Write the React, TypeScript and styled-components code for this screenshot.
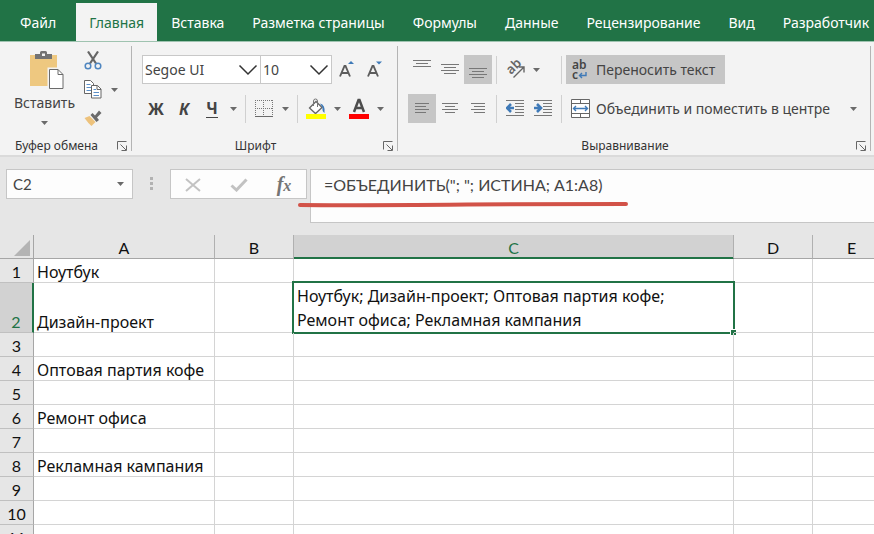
import React from "react";
import styled, { createGlobalStyle, css } from "styled-components";

const GREEN = "#217346";
const INK = "#444444";
const UI_FONT = `"Noto Sans", "Open Sans", sans-serif`;
const CELL_FONT = `Lato, "Noto Sans", sans-serif`;

const GlobalStyle = createGlobalStyle`
  *, *::before, *::after { box-sizing: border-box; }
  body { margin: 0; background: #e6e6e6; font-family: ${UI_FONT}; overflow: hidden; }
  button, input, select, textarea { font: inherit; color: inherit; margin: 0; }
`;

const Workbook = styled.div`
  display: flex;
  flex-direction: column;
  height: 100vh;
  overflow: hidden;
  color: ${INK};
`;

const TabBar = styled.nav`
  display: flex;
  flex: none;
  height: 42px;
  padding-top: 3px;
  background: ${GREEN};
  border-bottom: 1px solid #9fc3b0;
  overflow: hidden;
`;

const Tab = styled.button<{ $active?: boolean; $file?: boolean }>`
  flex: none;
  height: 39px;
  padding: 0 ${(p) => (p.$file ? 20 : p.$active ? 13 : 14)}px;
  border: 0;
  background: ${(p) => (p.$active ? "#f3f3f3" : "transparent")};
  color: ${(p) => (p.$active ? GREEN : "#ffffff")};
  font-size: 14px;
  line-height: 20px;
  white-space: nowrap;
`;

const Ribbon = styled.div`
  display: flex;
  flex: none;
  height: 115px;
  background: #f3f3f3;
  border-bottom: 2px solid #dadada;
  overflow: hidden;
`;

const Group = styled.section`
  display: flex;
  flex: none;
  flex-direction: column;
  margin: 4px 0;
  border-right: 1px solid #b4b4b4;
`;

const GroupBody = styled.div`
  display: flex;
  flex: 1;
  padding: 0 9px 0 10px;
`;

const GroupFooter = styled.div`
  display: flex;
  align-items: center;
  height: 10px;
  padding-right: 3px;
  font-size: 12px;
  line-height: 16px;
  color: #333333;
`;

const GroupLabel = styled.span`
  flex: 1;
  padding-right: 4px;
  text-align: center;
`;

const Rows = styled.div`
  display: flex;
  flex-direction: column;
  gap: 10px;
  padding-top: 9px;
`;

const Row = styled.div<{ $gap?: number }>`
  display: flex;
  align-items: center;
  gap: ${(p) => p.$gap ?? 0}px;
  height: 29px;
`;

const Tool = styled.button<{ $on?: boolean; $narrow?: boolean; $wide?: boolean }>`
  display: flex;
  flex: none;
  align-items: center;
  justify-content: center;
  gap: 5px;
  width: ${(p) => (p.$wide ? "auto" : p.$narrow ? "15px" : "28px")};
  height: 29px;
  padding: ${(p) => (p.$wide ? "0 10px 0 5px" : "0")};
  border: 0;
  background: ${(p) => (p.$on ? "#c6c6c6" : "transparent")};
  font-size: 14px;
  line-height: 20px;
  white-space: nowrap;
`;

const Letter = styled.span<{ $italic?: boolean; $under?: boolean }>`
  font-size: 16px;
  line-height: 18px;
  font-weight: 700;
  ${(p) => p.$italic && css`font-style: italic;`}
  ${(p) => p.$under && css`border-bottom: 1px solid ${INK};`}
`;

const Divider = styled.span`
  flex: none;
  width: 1px;
  height: 28px;
  margin: 0 4px;
  background: #d0d0d0;
`;

const PasteButton = styled.button`
  display: flex;
  flex-direction: column;
  align-items: center;
  width: 69px;
  padding: 4px 0 0;
  border: 0;
  background: transparent;
  font-size: 14px;
  line-height: 26px;
  & > svg:first-child { margin-left: 4px; }
  & > svg:last-child { margin-top: 5px; }
`;

const ClipTools = styled.div`
  display: grid;
  grid-template-columns: 28px 15px;
  grid-auto-rows: 29px;
`;

const Launcher = styled.button`
  display: flex;
  padding: 0;
  border: 0;
  background: transparent;
`;

const Combo = styled.label<{ $size: "name" | "size" }>`
  display: grid;
  grid-template-columns: 1fr 20px;
  align-items: center;
  width: ${(p) => (p.$size === "name" ? 119 : 71)}px;
  height: 29px;
  padding: 0 2px;
  border: 1px solid #c8c8c8;
  border-left-width: ${(p) => (p.$size === "name" ? 1 : 0)}px;
  background: #ffffff;
`;

const ComboSelect = styled.select`
  appearance: none;
  grid-area: 1 / 1 / 2 / 3;
  width: 100%;
  padding: 0;
  border: 0;
  background: transparent;
  font-size: 14px;
  line-height: 20px;
`;

const ComboMark = styled.span`
  grid-area: 1 / 2;
  display: flex;
  pointer-events: none;
`;

const FormulaBar = styled.div`
  position: relative;
  display: flex;
  flex: none;
  align-items: flex-start;
  padding: 12px 0 12px 6px;
  background: #e6e6e6;
`;

const NameBox = styled.div`
  display: flex;
  width: 127px;
  height: 30px;
  border: 1px solid #c6c6c6;
  background: #fdfdfd;
`;

const NameInput = styled.input`
  flex: 1;
  min-width: 0;
  padding: 0 6px;
  border: 0;
  background: transparent;
  font-family: ${CELL_FONT};
  font-size: 15px;
`;

const NameArrow = styled.button`
  display: flex;
  align-items: center;
  justify-content: center;
  width: 24px;
  padding: 0;
  border: 0;
  background: transparent;
`;

const Grip = styled.span`
  display: grid;
  gap: 2px;
  margin: 8px 17px 0;
  & > i { width: 3px; height: 3px; background: #b2b2b2; }
`;

const EntryTools = styled.div`
  display: flex;
  justify-content: space-between;
  width: 137px;
  height: 30px;
  padding: 0 8px;
  border: 1px solid #c6c6c6;
  background: #fdfdfd;
`;

const FormulaInput = styled.textarea`
  flex: 1;
  min-width: 0;
  height: 54px;
  margin-left: 3px;
  padding: 4px 13px;
  border: 1px solid #c6c6c6;
  border-right: 0;
  background: #fdfdfd;
  font-family: ${CELL_FONT};
  font-size: 16px;
  line-height: 22px;
  resize: none;
  outline: 0;
`;

const Underline = styled.svg`
  position: absolute;
  left: 297px;
  top: 41px;
  pointer-events: none;
`;

const Sheet = styled.div`
  flex: 1;
  min-height: 0;
  overflow: hidden;
`;

const Grid = styled.table`
  table-layout: fixed;
  width: 100%;
  min-width: 891px;
  border-collapse: separate;
  border-spacing: 0;
  background: #ffffff;
  color: #111111;
  font-family: ${CELL_FONT};
  font-size: 16px;
  line-height: 20px;
`;

const Col = styled.col<{ $w?: number }>`
  ${(p) => p.$w && css`width: ${p.$w}px;`}
`;

const Corner = styled.td`
  height: 24px;
  padding: 0;
  border-right: 1px solid #a6a6a6;
  border-bottom: 1px solid #a6a6a6;
  background: #e6e6e6;
  & > svg { display: block; margin: 3px 3px 0 auto; }
`;

const ColHead = styled.th<{ $on?: boolean }>`
  height: 24px;
  padding: 2px 0 0;
  border-right: 1px solid #b0b0b0;
  border-bottom: 1px solid ${(p) => (p.$on ? GREEN : "#a6a6a6")};
  box-shadow: ${(p) => (p.$on ? `inset 0 -1px ${GREEN}` : "none")};
  background: ${(p) => (p.$on ? "#d2d2d2" : "#e6e6e6")};
  color: ${(p) => (p.$on ? GREEN : "#111111")};
  font-weight: 400;
`;

const RowHead = styled.th<{ $on?: boolean }>`
  padding: 0;
  vertical-align: bottom;
  border-right: ${(p) => (p.$on ? `2px solid ${GREEN}` : "1px solid #a6a6a6")};
  border-bottom: 1px solid #c0c0c0;
  background: ${(p) => (p.$on ? "#d2d2d2" : "#e6e6e6")};
  color: ${(p) => (p.$on ? GREEN : "#111111")};
  font-weight: 400;
`;

const Line = styled.tr<{ $tall?: boolean }>`
  height: ${(p) => (p.$tall ? 50 : 24)}px;
`;

const Cell = styled.td<{ $active?: boolean }>`
  position: relative;
  padding: 0 3px;
  border-right: 1px solid #d4d4d4;
  border-bottom: 1px solid #d4d4d4;
  vertical-align: bottom;
  font-family: ${UI_FONT};
  ${(p) =>
    p.$active &&
    css`
      line-height: 24px;
      padding-right: 40px;
    `}
`;

const Selection = styled.span`
  position: absolute;
  inset: -2px;
  border: 2px solid ${GREEN};
  pointer-events: none;
  &::after {
    content: "";
    position: absolute;
    right: -4px;
    bottom: -4px;
    width: 7px;
    height: 7px;
    border: 1px solid #ffffff;
    background: ${GREEN};
  }
`;

const Arrow = () => (
  <svg width="7" height="4" viewBox="0 0 7 4" aria-hidden="true">
    <path d="M0 0h7L3.5 4z" fill="#6a6a6a" />
  </svg>
);

const Chevron = () => (
  <svg width="20" height="12" viewBox="0 0 20 12" fill="none" stroke="#333" strokeWidth="1.5" aria-hidden="true">
    <path d="M1.5 1.5L10 10l8.500-8.500" />
  </svg>
);

const PasteIcon = () => (
  <svg width="35" height="40" viewBox="0 0 35 40" aria-hidden="true">
    <path d="M1 5h27v31H1z" fill="#eec880" />
    <path d="M6 9V4h5V2.500Q11 1 12.500 1h4Q18 1 18 2.500V4h5v5z" fill="#737373" />
    <path d="M13 3.500h3V6h-3z" fill="#f3f3f3" />
    <path d="M18.500 17.500h12l4.500 5v17.500H18.500z" fill="#f3f3f3" />
    <path d="M20.500 19.500h8.500l5 5v14H20.500z" fill="#fff" stroke="#6b6b6b" />
    <path d="M29 19.500v5h5" fill="none" stroke="#6b6b6b" />
  </svg>
);

const CutIcon = () => (
  <svg width="18" height="19" viewBox="0 0 18 19" fill="none" aria-hidden="true">
    <path d="M4 .5l8 12M14 .5l-8 12" stroke="#666" strokeWidth="2.200" />
    <circle cx="4" cy="15" r="2.800" stroke="#4f86c0" strokeWidth="1.500" />
    <circle cx="14" cy="15" r="2.800" stroke="#4f86c0" strokeWidth="1.500" />
  </svg>
);

const CopyIcon = () => (
  <svg width="18" height="19" viewBox="0 0 18 19" aria-hidden="true">
    <path d="M.5.5h6l3 3V13.500h-9z" fill="#fff" stroke="#666" />
    <path d="M2.500 4.500h4M2.500 7.500h5M2.500 10.500h5" stroke="#5a8fc8" />
    <path d="M7.500 5.500h6L17 9V18H7.500z" fill="#fff" stroke="#666" />
    <path d="M13 5.500v4h4" fill="none" stroke="#666" />
    <path d="M9.500 9.500h2.500M9.500 12.500h5.500M9.500 15.500h5.500" stroke="#5a8fc8" />
  </svg>
);

const BrushIcon = () => (
  <svg width="18" height="17" viewBox="0 0 18 17" aria-hidden="true">
    <path d="M.5 8l5-2 6 6L7.500 16Q4 13 .5 8z" fill="#edc27c" />
    <path d="M6.500 5l2-2L11 5.500 15 .5 17.500 3 13 7.500l2 2.500-2.500 2z" fill="#6a6a6a" />
  </svg>
);

const LauncherIcon = () => (
  <svg width="11" height="10" viewBox="0 0 11 10" fill="none" stroke="#666" aria-hidden="true">
    <path d="M.5 8.500V.5H9.500M3.500 3.500l5.500 5.500M9.500 4.500v5h-5" />
  </svg>
);

const FontSizeIcon = ({ up }: { up?: boolean }) => (
  <svg width="20" height="19" viewBox="0 0 20 19" aria-hidden="true">
    <path d="M4 16.500L8.500 6h1L14 16.500M5.800 13h6.400" fill="none" stroke="#5c5c5c" strokeWidth="1.900" />
    <path d={up ? "M12 4h6L15 1z" : "M12 1.500h6l-3 3z"} fill="#3f7ab8" />
  </svg>
);

const BordersIcon = () => (
  <svg width="18" height="17" viewBox="0 0 18 17" fill="none" aria-hidden="true">
    <path d="M0 .5h18M0 8.500h18M.5 0v16M8.500 0v16M17.500 0v16" stroke="#777" strokeDasharray="1 1" />
    <path d="M0 16.500h18" stroke="#6a6a6a" />
  </svg>
);

const FillIcon = () => (
  <svg width="20" height="21" viewBox="0 0 20 21" aria-hidden="true">
    <path d="M3.500 10l6.500-6.500 6 6-6.500 6z" fill="#fff" stroke="#666" strokeWidth="1.300" />
    <path d="M7.500 8V3q0-2 2-2t2 2v6" fill="none" stroke="#777" />
    <path d="M14 5.500q5.500 1 4.500 9.500Q16 13.500 16.500 9.500z" fill="#3f7ab8" />
    <path d="M0 16h20v5H0z" fill="#ffff00" />
  </svg>
);

const FontColorIcon = () => (
  <svg width="20" height="21" viewBox="0 0 20 21" aria-hidden="true">
    <path d="M5 14L9.500 2h1L15 14M6.700 10h6.600" fill="none" stroke="#4d4d4d" strokeWidth="2.500" />
    <path d="M0 16h20v5H0z" fill="#ff0000" />
  </svg>
);

/** Horizontal text rules, given as [x1, x2] pairs, stacked 3px apart. */
const Rules = ({ lines, y }: { lines: number[][]; y: number }) => (
  <svg width="18" height="25" viewBox="0 0 18 25" aria-hidden="true">
    <path
      d={lines.map(([a, b], i) => `M${a} ${y + i * 3 + 0.5}H${b}`).join("")}
      stroke="#777777"
    />
  </svg>
);

const CENTERED = [[0, 18], [3, 15], [0, 18], [3, 15]];
const CENTERED_SMALL = [[1, 17], [4, 14], [1, 17], [4, 14]];
const LEFT = [[2, 16], [2, 13], [2, 16], [2, 13]];
const RIGHT = [[2, 16], [5, 16], [2, 16], [5, 16]];

const SlantedText = styled.text`
  font-family: ${UI_FONT};
  font-size: 13px;
  font-weight: 600;
  fill: #666666;
`;

const OrientationIcon = () => (
  <svg width="20" height="21" viewBox="0 0 20 21" fill="none" aria-hidden="true">
    <SlantedText transform="translate(6 16) rotate(-45)">ab</SlantedText>
    <path d="M8.500 18.500L18.500 8.500M13.500 8h5.500v5.500" stroke="#666" strokeWidth="1.400" />
  </svg>
);

const IndentIcon = ({ more }: { more?: boolean }) => (
  <svg width="18" height="19" viewBox="0 0 18 19" fill="none" aria-hidden="true">
    <path d="M0 1.500h18M9 4.500h9M9 7.500h9M9 10.500h9M9 13.500h9M0 16.500h18" stroke="#777777" />
    <path
      d={more ? "M0 9h6.500M3 5l4 4-4 4" : "M8 9H1.500M5 5L1 9l4 4"}
      stroke="#3f7ab8"
      strokeWidth="2.600"
    />
  </svg>
);

const WrapGlyph = styled.span`
  width: 20px;
  padding-left: 1px;
  font-size: 12px;
  line-height: 10px;
  font-weight: 600;
  text-align: left;
`;

const WrapIcon = () => (
  <WrapGlyph aria-hidden="true">
    ab
    <br />
    c
    <svg width="9" height="7" viewBox="0 0 9 7" fill="none" stroke="#3f7ab8" strokeWidth="1.400">
      <path d="M8 0v3.500H1.500M4 1L1.500 3.500 4 6" />
    </svg>
  </WrapGlyph>
);

const MergeIcon = () => (
  <svg width="20" height="19" viewBox="0 0 20 19" fill="none" aria-hidden="true">
    <path d="M.5.5h18v18H.5z" fill="#fff" stroke="#666" />
    <path d="M.5 4.500h18M.5 14.500h18M9.500.5v4M9.500 14.500v4" stroke="#666" />
    <path d="M2.500 9.500h14M5 7L2.500 9.500 5 12M14 7l2.500 2.500L14 12" stroke="#3f7ab8" strokeWidth="1.400" />
  </svg>
);

const CancelIcon = () => (
  <svg width="16" height="14" viewBox="0 0 16 14" fill="none" stroke="#c2c2c2" strokeWidth="2" aria-hidden="true">
    <path d="M1 1l14 12M15 1L1 13" />
  </svg>
);

const AcceptIcon = () => (
  <svg width="18" height="14" viewBox="0 0 18 14" fill="none" stroke="#c2c2c2" strokeWidth="3" aria-hidden="true">
    <path d="M1.500 7.500l5 4.500L16.500 1.500" />
  </svg>
);

const Fx = styled.span`
  font-family: "Liberation Serif", serif;
  font-style: italic;
  font-weight: 700;
  font-size: 20px;
  line-height: 24px;
  color: #757575;
  & > small { font-size: 16px; }
`;

const TABS = ["Файл", "Главная", "Вставка", "Разметка страницы", "Формулы", "Данные", "Рецензирование", "Вид", "Разработчик"];
const COLUMNS = ["A", "B", "C", "D", "E"];
const ROWS: string[] = ["Ноутбук", "Дизайн-проект", "", "Оптовая партия кофе", "", "Ремонт офиса", "", "Рекламная кампания", "", "", ""];
const RESULT = "Ноутбук; Дизайн-проект; Оптовая партия кофе; Ремонт офиса; Рекламная кампания";

const Footer = ({ label }: { label: string }) => (
  <GroupFooter>
    <GroupLabel>{label}</GroupLabel>
    <Launcher aria-label={label}>
      <LauncherIcon />
    </Launcher>
  </GroupFooter>
);

const Drop = ({ label }: { label: string }) => (
  <Tool $narrow aria-label={label}>
    <Arrow />
  </Tool>
);

export default function App() {
  return (
    <Workbook>
      <GlobalStyle />
      <TabBar>
        {TABS.map((t, i) => (
          <Tab key={t} $file={i === 0} $active={i === 1}>
            {t}
          </Tab>
        ))}
      </TabBar>

      <Ribbon>
        <Group>
          <GroupBody>
            <PasteButton>
              <PasteIcon />
              Вставить
              <Arrow />
            </PasteButton>
            <ClipTools>
              <Tool aria-label="Вырезать"><CutIcon /></Tool>
              <span />
              <Tool aria-label="Копировать"><CopyIcon /></Tool>
              <Drop label="Параметры копирования" />
              <Tool aria-label="Формат по образцу"><BrushIcon /></Tool>
            </ClipTools>
          </GroupBody>
          <Footer label="Буфер обмена" />
        </Group>

        <Group>
          <GroupBody>
            <Rows>
              <Row>
                <Combo $size="name">
                  <ComboSelect aria-label="Шрифт" defaultValue="Segoe UI">
                    <option>Segoe UI</option>
                  </ComboSelect>
                  <ComboMark><Chevron /></ComboMark>
                </Combo>
                <Combo $size="size">
                  <ComboSelect aria-label="Размер шрифта" defaultValue="10">
                    <option>10</option>
                  </ComboSelect>
                  <ComboMark><Chevron /></ComboMark>
                </Combo>
                <Tool aria-label="Увеличить размер"><FontSizeIcon up /></Tool>
                <Tool aria-label="Уменьшить размер"><FontSizeIcon /></Tool>
              </Row>
              <Row>
                <Tool><Letter>Ж</Letter></Tool>
                <Tool><Letter $italic>К</Letter></Tool>
                <Tool><Letter $under>Ч</Letter></Tool>
                <Drop label="Подчеркивание" />
                <Divider />
                <Tool aria-label="Границы"><BordersIcon /></Tool>
                <Drop label="Виды границ" />
                <Divider />
                <Tool aria-label="Цвет заливки"><FillIcon /></Tool>
                <Drop label="Цвета заливки" />
                <Tool aria-label="Цвет текста"><FontColorIcon /></Tool>
                <Drop label="Цвета текста" />
              </Row>
            </Rows>
          </GroupBody>
          <Footer label="Шрифт" />
        </Group>

        <Group>
          <GroupBody>
            <Rows>
              <Row>
                <Tool aria-label="По верхнему краю"><Rules lines={CENTERED.slice(0, 3)} y={3} /></Tool>
                <Tool aria-label="По середине"><Rules lines={CENTERED} y={7} /></Tool>
                <Tool $on aria-label="По нижнему краю"><Rules lines={CENTERED} y={11} /></Tool>
                <Divider />
                <Tool aria-label="Ориентация"><OrientationIcon /></Tool>
                <Drop label="Варианты ориентации" />
              </Row>
              <Row>
                <Tool $on aria-label="По левому краю"><Rules lines={LEFT} y={7} /></Tool>
                <Tool aria-label="По центру"><Rules lines={CENTERED_SMALL} y={7} /></Tool>
                <Tool aria-label="По правому краю"><Rules lines={RIGHT} y={7} /></Tool>
                <Divider />
                <Tool aria-label="Уменьшить отступ"><IndentIcon /></Tool>
                <Tool aria-label="Увеличить отступ"><IndentIcon more /></Tool>
              </Row>
            </Rows>
            <Rows>
              <Row><Divider /></Row>
              <Row><Divider /></Row>
            </Rows>
            <Rows>
              <Row>
                <Tool $wide $on><WrapIcon />Переносить текст</Tool>
              </Row>
              <Row $gap={6}>
                <Tool $wide><MergeIcon />Объединить и поместить в центре</Tool>
                <Drop label="Варианты объединения" />
              </Row>
            </Rows>
          </GroupBody>
          <Footer label="Выравнивание" />
        </Group>
      </Ribbon>

      <FormulaBar>
        <NameBox>
          <NameInput aria-label="Имя ячейки" defaultValue="C2" />
          <NameArrow aria-label="Список имен"><Arrow /></NameArrow>
        </NameBox>
        <Grip><i /><i /><i /></Grip>
        <EntryTools>
          <Tool aria-label="Отмена"><CancelIcon /></Tool>
          <Tool aria-label="Ввод"><AcceptIcon /></Tool>
          <Tool aria-label="Вставить функцию"><Fx>f<small>x</small></Fx></Tool>
        </EntryTools>
        <FormulaInput aria-label="Строка формул" spellCheck={false} defaultValue={'=ОБЪЕДИНИТЬ("; "; ИСТИНА; A1:A8)'} />
        <Underline width="332" height="10" viewBox="0 0 332 10" aria-hidden="true">
          <path d="M3 7Q60 7.500 170 6.500L329 6" fill="none" stroke="#d25248" strokeWidth="4" strokeLinecap="round" />
        </Underline>
      </FormulaBar>

      <Sheet>
        <Grid>
          <colgroup>
            <Col $w={34} />
            <Col $w={181} />
            <Col $w={79} />
            <Col $w={440} />
            <Col $w={79} />
            <Col />
          </colgroup>
          <thead>
            <tr>
              <Corner>
                <svg width="16" height="16" viewBox="0 0 16 16" aria-hidden="true">
                  <path d="M16 0v16H0z" fill="#b4b4b4" />
                </svg>
              </Corner>
              {COLUMNS.map((c) => (
                <ColHead key={c} scope="col" $on={c === "C"}>{c}</ColHead>
              ))}
            </tr>
          </thead>
          <tbody>
            {ROWS.map((text, r) => (
              <Line key={r} $tall={r === 1}>
                <RowHead scope="row" $on={r === 1}>{r + 1}</RowHead>
                {COLUMNS.map((c) => {
                  const active = c === "C" && r === 1;
                  return (
                    <Cell key={c} $active={active}>
                      {c === "A" ? text : active ? RESULT : null}
                      {active && <Selection />}
                    </Cell>
                  );
                })}
              </Line>
            ))}
          </tbody>
        </Grid>
      </Sheet>
    </Workbook>
  );
}
